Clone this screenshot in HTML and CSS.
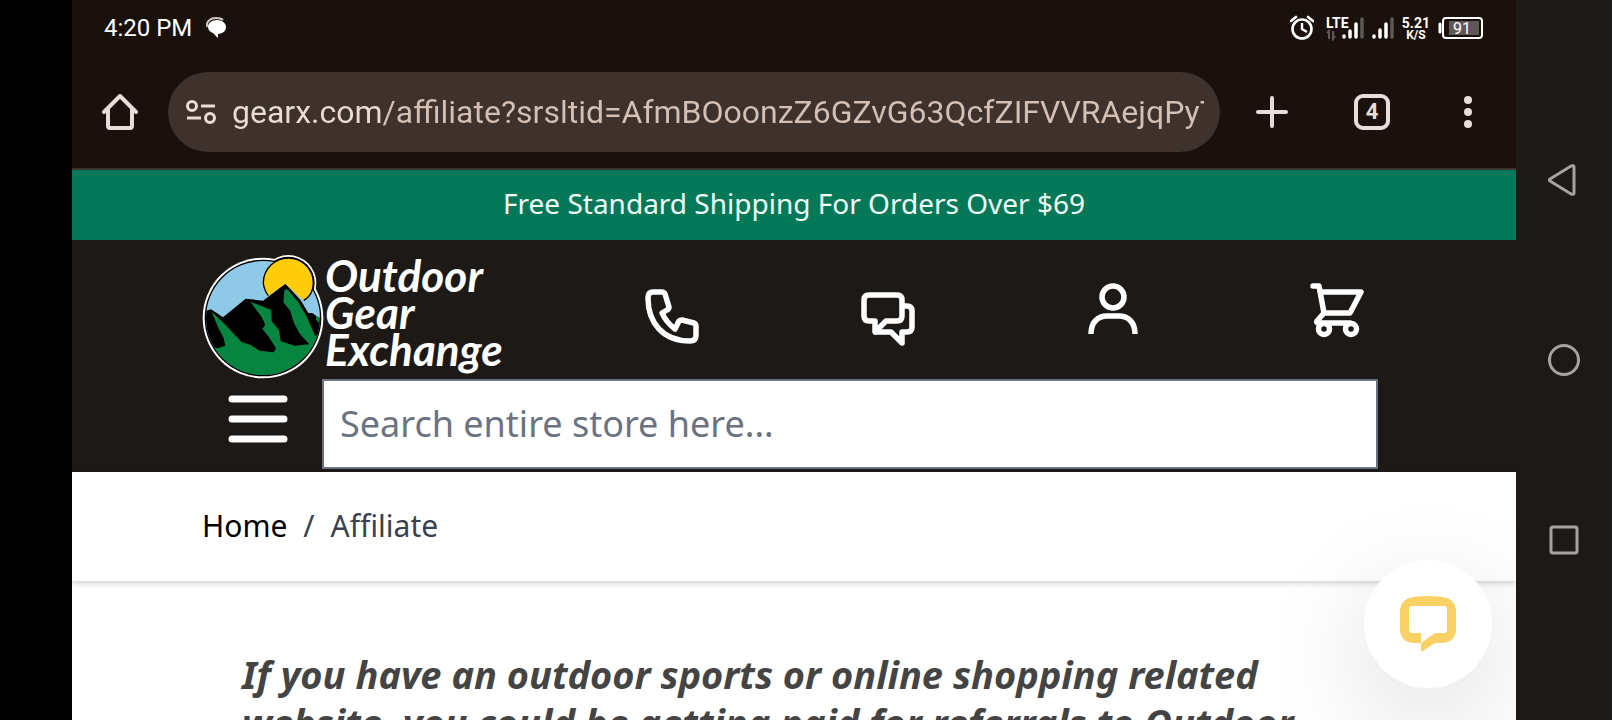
FILE: index.html
```
<!DOCTYPE html>
<html lang="en">
<head>
  <meta charset="UTF-8">
  <meta name="viewport" content="width=device-width, initial-scale=1.0">
  <title>Affiliate | Outdoor Gear Exchange</title>
  <link rel="stylesheet" href="styles.css">
</head>
<body>
  <div class="screen">
    <!-- Status bar -->
    <div class="status-bar">
      <span class="clock">4:20 PM</span>
      <svg width="22" height="22" viewBox="0 0 22 22">
        <path d="M1 10C0 4 5 1 10 1c4 0 6 1 7 2" fill="none" stroke="#cfc8c4" stroke-width="2"/>
        <path d="M11 3c5 0 9 3 9 7s-3 6-7 7h-1v4l-5-5c-3-1-5-3-5-6 0-4 4-7 9-7z" fill="#fff"/>
      </svg>
      <div class="status-icons">
        <svg width="24" height="26" viewBox="0 0 24 26" fill="none" stroke="#fff">
          <circle cx="12" cy="14" r="9.5" stroke-width="2.6"/>
          <path d="M12 8v6l5 3" stroke-width="2.4"/>
          <path d="M1 6l5-4M23 6l-5-4" stroke-width="2.6" stroke-linecap="round"/>
        </svg>
        <svg width="38" height="26" viewBox="0 0 38 26">
          <text class="lte" x="0" y="13">LTE</text>
          <path d="M3 24v-8l-2 2M7 16v8l2-3" fill="none" stroke="#5f5854" stroke-width="2"/>
          <g stroke-width="3.500" stroke-linecap="round">
            <path d="M18 21v1M24 16v6M30 9v13" stroke="#fff"/>
            <path d="M36 4v18" stroke="#5f5854"/>
          </g>
        </svg>
        <svg width="22" height="26" viewBox="0 0 22 26">
          <g stroke-width="3.500" stroke-linecap="round">
            <path d="M2 21v1M8 15v7M14 9v13" stroke="#fff"/>
            <path d="M20 4v18" stroke="#5f5854"/>
          </g>
        </svg>
        <div class="speed"><span>5.21</span><span class="unit">K/S</span></div>
        <svg width="46" height="24" viewBox="0 0 46 24">
          <path d="M2 8v8" stroke="#fff" stroke-width="3" stroke-linecap="round"/>
          <rect x="5" y="2" width="39" height="20" rx="3" fill="none" stroke="#fff" stroke-width="2"/>
          <rect x="11" y="5" width="30" height="14" fill="#5f5854"/>
          <text class="charge" x="24" y="18">91</text>
        </svg>
      </div>
    </div>

    <!-- Browser toolbar -->
    <div class="toolbar">
      <button class="tool" aria-label="Home page">
        <svg width="36" height="36" viewBox="0 0 36 36" fill="none" stroke="#eaddd7" stroke-width="4" stroke-linecap="round" stroke-linejoin="round">
          <path d="M2 18L18 2l16 16M6 15v17q0 2 2 2h20q2 0 2-2V15"/>
        </svg>
      </button>
      <div class="address">
        <svg width="30" height="26" viewBox="0 0 30 26" fill="none" stroke="#eaddd7" stroke-width="3">
          <circle cx="6" cy="7" r="4.500"/>
          <circle cx="24" cy="19" r="4.500"/>
          <path d="M15 7h14M1 19h14"/>
        </svg>
        <input type="text" class="url" aria-label="Address" value="gearx.com/affiliate?srsltid=AfmBOoonzZ6GZvG63QcfZIFVVRAejqPyTn">
      </div>
      <button class="tool" aria-label="New tab">
        <svg width="32" height="32" viewBox="0 0 32 32" stroke="#eaddd7" stroke-width="4" stroke-linecap="round">
          <path d="M16 2v28M2 16h28"/>
        </svg>
      </button>
      <button class="tool"><span class="tab-count">4</span></button>
      <button class="tool" aria-label="Menu">
        <svg width="8" height="32" viewBox="0 0 8 32" fill="#eaddd7">
          <circle cx="4" cy="4" r="4"/>
          <circle cx="4" cy="16" r="4"/>
          <circle cx="4" cy="28" r="4"/>
        </svg>
      </button>
    </div>

    <!-- Store page -->
    <div class="banner">Free Standard Shipping For Orders Over $69</div>

    <header class="header">
      <div class="header-top">
        <a href="#" class="logo">
          <svg width="122" height="124" viewBox="35 46 366 372">
            <circle cx="218" cy="235" r="181" fill="#fff"/>
            <circle cx="294" cy="130" r="84" fill="#fff"/>
            <circle cx="218" cy="235" r="175" fill="#000"/>
            <circle cx="294" cy="130" r="79" fill="#000"/>
            <clipPath id="disc"><circle cx="218" cy="235" r="171"/></clipPath>
            <g clip-path="url(#disc)">
              <path d="M40 50h360v360H40z" fill="#8fc9e8"/>
              <path d="M40 215L62 209L98 233L166 177L218 183L285 132L330 180L354 220L366 220L386 235H400V419H40z" fill="#000"/>
              <path d="M64 216L100 250L130 282L155 308L180 315L208 333L250 338L257 326L234 290L216 268L225 255L214 232L180 186L243 211L244 244L266 272L271 304L312 318L357 314L328 282L310 248L300 214L279 188L282 152L290 148L322 185L350 232L374 288L400 280V419H40L60 320L82 326L105 318L100 295L84 265z" fill="#068541"/>
              <path d="M377 229l12 4-3 17-9-10z" fill="#068541"/>
            </g>
            <path d="M234 168A75 75 0 0 1 219 130a75 75 0 0 1 150 0c0 20-8 40-29 53L285 132z" fill="#ffcd0a"/>
            <path d="M234 168A75 75 0 0 1 219 130a75 75 0 0 1 150 0c0 20-8 40-29 53" fill="none" stroke="#000" stroke-width="4"/>
          </svg>
          <span class="logo-text">Outdoor<br>Gear<br>Exchange</span>
        </a>
        <nav class="links">
          <a href="#" aria-label="Call us">
            <svg width="54" height="70" viewBox="0 0 54 70" fill="none" stroke="#fff" stroke-width="5.500" stroke-linejoin="round">
              <path d="M8 10h9q2 0 3 2l4 13q0 2-2 3l-5 3q4 9 13 16l4-8q1-1 3-1l12 3q2 1 2 3v9q0 6-6 6C18 59 3 41 3 16q0-6 5-6z"/>
            </svg>
          </a>
          <a href="#" aria-label="Chat">
            <svg width="54" height="70" viewBox="0 0 54 70" fill="none" stroke="#fff" stroke-width="5.500" stroke-linejoin="round">
              <path d="M8 13h28q5 0 5 5v16q0 5-5 5H25L14 50V39H8q-5 0-5-5V18q0-5 5-5z"/>
              <path d="M42 24h4q5 0 5 5v16q0 5-5 5h-5v11L30 50H14"/>
            </svg>
          </a>
          <a href="#" aria-label="My account">
            <svg width="54" height="70" viewBox="0 0 54 70" fill="none" stroke="#fff" stroke-width="5.500">
              <circle cx="27" cy="15" r="11"/>
              <path d="M5 52c0-12 7-18 16-18h12c9 0 16 6 16 18"/>
            </svg>
          </a>
          <a href="#" aria-label="Cart">
            <svg width="54" height="70" viewBox="0 0 54 70" fill="none" stroke="#fff" stroke-width="5.500" stroke-linecap="round" stroke-linejoin="round">
              <path d="M3 4h6l5 27h26l11-21H11M14 31l-7 8q-1 2 2 2h31"/>
              <circle cx="14" cy="47" r="5.500"/>
              <circle cx="41" cy="47" r="5.500"/>
            </svg>
          </a>
        </nav>
      </div>
      <div class="header-search">
        <button class="menu" aria-label="Open menu">
          <svg width="60" height="48" viewBox="0 0 60 48" stroke="#fff" stroke-width="7" stroke-linecap="round">
            <path d="M4 4h52M4 24h52M4 44h52"/>
          </svg>
        </button>
        <input type="text" class="search" aria-label="Search" placeholder="Search entire store here...">
      </div>
    </header>

    <nav class="breadcrumbs">
      <a href="#">Home</a>
      <span>/</span>
      <span>Affiliate</span>
    </nav>

    <main class="content">
      <p>If you have an outdoor sports or online shopping related website, you could be getting paid for referrals to Outdoor</p>
    </main>

    <button class="chat-button" aria-label="Open chat">
      <svg width="56" height="56" viewBox="0 0 56 56" fill="#fad165">
        <path fill-rule="evenodd" d="M13 1Q28-1 43 1q12 2 13 13 1 10 0 20-1 12-13 13h-8L21 56V38l0 9h-8Q1 46 0 34-1 24 0 14 1 3 13 1zM12 10q-3 0-3 3v21q0 3 3 3h9v10l14-10h9q3 0 3-3V13q0-3-3-3z"/>
      </svg>
    </button>
  </div>

  <!-- System navigation -->
  <div class="system-nav">
    <button aria-label="Back">
      <svg width="32" height="32" viewBox="0 0 32 32"><path d="M23 2q3-1 3 1v26q0 2-3 1L2 17q-2-1 0-2z"/></svg>
    </button>
    <button aria-label="Home">
      <svg width="32" height="32" viewBox="0 0 32 32"><circle cx="16" cy="16" r="14.500"/></svg>
    </button>
    <button aria-label="Recent apps">
      <svg width="32" height="32" viewBox="0 0 32 32"><rect x="3" y="3" width="26" height="26" rx="2"/></svg>
    </button>
  </div>
</body>
</html>
```

FILE: styles.css
```
* {
  box-sizing: border-box;
}
body {
  margin: 0;
  padding-left: 72px;
  height: 100vh;
  display: flex;
  overflow: hidden;
  background: #000;
  font-family: 'Noto Sans', sans-serif;
}
button {
  padding: 0;
  border: none;
  background: none;
  cursor: pointer;
}
a {
  color: inherit;
  text-decoration: none;
}
svg {
  display: block;
  flex: none;
}
.screen {
  position: relative;
  flex: 1;
  min-width: 0;
  overflow: hidden;
  background: #fff;
}

/* Status bar */
.status-bar {
  display: flex;
  align-items: center;
  gap: 14px;
  height: 56px;
  padding: 0 32px;
  background: #1a110c;
  color: #fff;
  font-family: Roboto, sans-serif;
}
.clock {
  font-size: 24px;
}
.status-icons {
  display: flex;
  align-items: center;
  gap: 8px;
  margin-left: auto;
}
.status-icons svg:first-child {
  margin-right: 4px;
}
.lte {
  fill: #fff;
  font-size: 14px;
  font-weight: 700;
}
.speed {
  display: flex;
  flex-direction: column;
  align-items: center;
  padding-top: 2px;
  font-size: 14px;
  font-weight: 700;
  line-height: 12px;
}
.speed .unit {
  font-size: 12px;
}
.charge {
  fill: #fff;
  font-size: 16px;
  text-anchor: middle;
}

/* Browser toolbar */
.toolbar {
  display: flex;
  align-items: center;
  height: 114px;
  border-bottom: 2px solid #3f312b;
  background: #1a110c;
  font-family: Roboto, sans-serif;
}
.tool {
  display: flex;
  align-items: center;
  justify-content: center;
  width: 96px;
  height: 96px;
}
.tool:nth-of-type(2) {
  width: 104px;
}
.address {
  display: flex;
  align-items: center;
  gap: 16px;
  flex: 1;
  height: 80px;
  padding: 0 16px 0 18px;
  border-radius: 40px;
  background: #3f312b;
}
/* Host part is lighter than the path */
.url {
  flex: 1;
  min-width: 0;
  padding: 0;
  border: none;
  outline: none;
  background: linear-gradient(90deg, #eaddd7 148px, #d5c0b6 148px);
  -webkit-background-clip: text;
  background-clip: text;
  color: transparent;
  font-family: inherit;
  font-size: 32px;
  line-height: 40px;
}
.tab-count {
  width: 36px;
  height: 36px;
  border: 4px solid #eaddd7;
  border-radius: 9px;
  color: #eaddd7;
  font-family: Roboto, sans-serif;
  font-size: 22px;
  font-weight: 700;
  line-height: 28px;
}

/* Store header */
.banner {
  padding: 14px 16px 18px;
  background: #057857;
  color: #f0fffa;
  font-size: 28px;
  line-height: 38px;
  text-align: center;
}
.header {
  padding: 0 138px 3px 130px;
  background: #1d1916;
}
.header-top {
  display: flex;
  height: 139px;
  padding-top: 15px;
}
.logo {
  display: flex;
  gap: 1px;
}
.logo-text {
  padding-top: 2px;
  color: #fff;
  font-family: Lato, sans-serif;
  font-size: 44px;
  font-style: italic;
  font-weight: 700;
  line-height: 37px;
}
.links {
  display: grid;
  grid-template-columns: 54px 217fr 225fr 225fr;
  justify-items: end;
  flex: 1;
  margin: 27px 14px 0 142px;
}
.header-search {
  display: flex;
}
.menu {
  display: flex;
  justify-content: center;
  width: 120px;
  padding: 16px 8px 0 0;
}
.search {
  flex: 1;
  min-width: 0;
  height: 90px;
  padding: 0 16px 2px;
  border: 2px solid #6b7280;
  background: #fff;
  font-family: inherit;
  font-size: 36px;
}
.search::placeholder {
  color: #6b7280;
}

/* Page content */
.breadcrumbs {
  display: flex;
  gap: 16px;
  padding: 34px 130px 35px;
  box-shadow: 0 2px 6px rgba(0, 0, 0, 0.2);
  color: #374151;
  font-size: 30px;
  line-height: 40px;
}
.breadcrumbs a {
  color: #000;
}
.content {
  padding: 69px 170px 0;
  color: #444;
}
.content p {
  margin: 0;
  font-size: 38px;
  font-style: italic;
  font-weight: 700;
  line-height: 48px;
}
.chat-button {
  position: absolute;
  right: 24px;
  bottom: 32px;
  display: flex;
  align-items: center;
  justify-content: center;
  width: 128px;
  height: 128px;
  border-radius: 50%;
  background: #fff;
  box-shadow: 0 32px 112px rgba(0, 0, 0, 0.14);
}

/* System navigation */
.system-nav {
  display: flex;
  flex-direction: column;
  align-items: center;
  justify-content: center;
  gap: 148px;
  width: 96px;
  background: #1d1916;
}
.system-nav svg {
  fill: none;
  stroke: #a5a3a2;
  stroke-width: 3;
}
```
